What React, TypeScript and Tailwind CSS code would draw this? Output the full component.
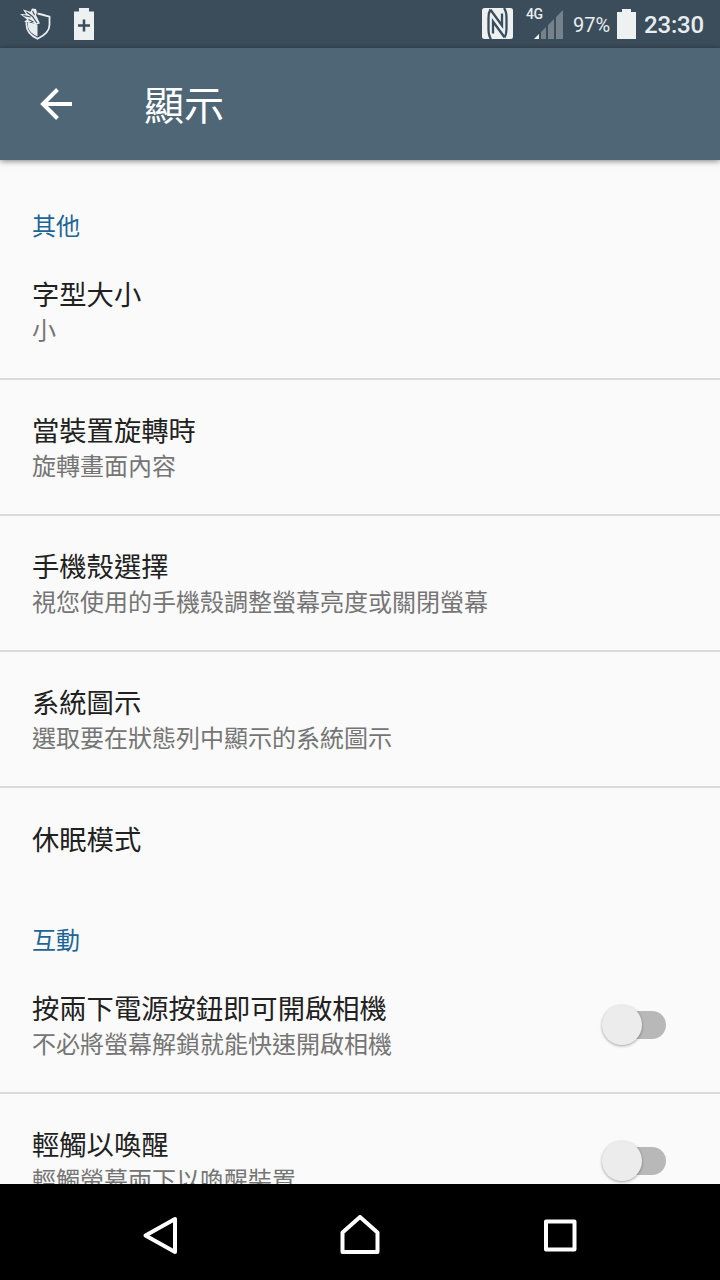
import React from 'react';

function ShieldIcon() {
  return (
    <svg width="32" height="32" viewBox="0 0 32 32" fill="none">
      <path d="M17.500 5.500c4 .7 7 1.700 12 3.200v8c0 6-4.500 10.500-12 14-7-3.200-11-8-11-14v-3" stroke="#e8edf0" strokeWidth="1.800" />
      <path d="M8 14l9.500 2.500v12c-6-2.500-9.500-6.500-9.500-11z" fill="#e8edf0" />
      <path d="M0 6l6 .2L3 1.500l7.500 2.200L12 .5l4 .5 1 3-1 3 4 8.500-4.500 1-4-2.500L4 14l3-2.500z" fill="#e8edf0" />
      <path d="M3.500 7.500l7 1.500M6.500 4l6 4.500 4.500 6.500M8.500 11.500l5 2.500M12.500 3l2 4" stroke="#3b4d5b" strokeWidth="1.100" />
    </svg>
  );
}

function BatteryPlusIcon() {
  return (
    <svg width="20" height="32" viewBox="0 0 20 32">
      <path d="M5 0h10v3.500h5V32H0V3.500h5z" fill="#edf1f2" />
      <path d="M10 11.500v12M4 17.500h12" stroke="#3b4d5b" strokeWidth="2.500" />
    </svg>
  );
}

function NfcIcon() {
  return (
    <svg width="31" height="31" viewBox="0 0 31 31" fill="none">
      <rect width="31" height="31" rx="2.500" fill="#edf1f2" />
      <path d="M8.500 1.500C6.500 4.500 6.500 7 6.500 10v11c0 5 .3 7 2.500 10M22 0c2.300 3 2.500 5 2.500 10v11c0 3 0 5.500-2 8.500" stroke="#3b4d5b" strokeWidth="2.300" />
      <path d="M8.500 1.800L20 17.500V5.500M22.500 29.200L11 13.500v12" stroke="#3b4d5b" strokeWidth="2.300" />
    </svg>
  );
}

function StatusBar() {
  return (
    <header className="flex h-12 shrink-0 items-start bg-[#3b4d5b] font-[Roboto,sans-serif] text-[#e8edf0]">
      <div className="flex pl-5 pt-2"><ShieldIcon /></div>
      <div className="pl-[22px] pt-2"><BatteryPlusIcon /></div>
      <div className="ml-auto flex items-start pr-4">
        <div className="mr-[13px] pt-2"><NfcIcon /></div>
        <div className="relative mr-[10px] h-12 w-[37px]">
          <span className="absolute left-0 top-[7px] text-[14px] font-medium leading-[15px] tracking-[-0.500px]">4G</span>
          <svg className="absolute left-[8px] top-[10px]" width="29" height="29" viewBox="0 0 29 29">
            <path d="M0 29l5-5v5zM7 22l5-5v12H7zM14 15l6-6v20h-6zM22 7l7-7v29h-7z" fill="#75828b" />
            <path d="M0 29l5-5v5z" fill="#edf1f2" />
          </svg>
        </div>
        <span className="w-[44px] whitespace-nowrap pt-[13px] text-[20px] leading-6">97%</span>
        <svg className="mt-[9px]" width="19" height="30" viewBox="0 0 19 30">
          <path d="M5 0h9v3h5v27H0V3h5z" fill="#edf1f2" />
        </svg>
        <span className="ml-2 w-[60px] whitespace-nowrap pt-[11px] text-[24px] font-medium leading-7 tracking-[-0.200px]">23:30</span>
      </div>
    </header>
  );
}

function AppBar() {
  return (
    <div className="z-10 flex h-28 shrink-0 items-center bg-[#4f6676] pl-10 text-white shadow-[0_1px_6px_rgba(0,0,0,0.5)]">
      <svg width="32" height="32" viewBox="0 0 32 32" fill="none" stroke="#fff" strokeWidth="4">
        <path d="M32 16H4M17.500 1.500L3 16l14.500 14.500" />
      </svg>
      <h1 className="ml-[72px] pb-[3px] text-[40px] font-normal leading-[56px]">顯示</h1>
    </div>
  );
}

function SectionTitle({ children }: { children: React.ReactNode }) {
  return <h2 className="flex h-[66px] shrink-0 items-end px-8 pb-[3px] text-[24px] font-normal leading-8 text-[#1d6596]">{children}</h2>;
}

function Toggle() {
  return (
    <div className="mr-[54.500px] flex h-[42px] w-[65px] items-center pl-px">
      <span className="z-10 size-10 shrink-0 rounded-full bg-[#ececec] shadow-[0_1px_3px_rgba(0,0,0,0.35)]" />
      <span className="-ml-5 h-7 w-11 rounded-r-full bg-[#b8b8b8]" />
    </div>
  );
}

type RowProps = { title: string; summary?: string; divider?: boolean; toggle?: boolean };

function Row({ title, summary, divider = true, toggle = false }: RowProps) {
  return (
    <div className={`flex shrink-0 items-center justify-between ${summary ? 'h-[136px]' : 'h-[104px] pb-1'} ${divider ? 'border-b-2 border-[#dadada]' : ''}`}>
      <div className="pl-8">
        <div className="text-[27.300px] leading-[35px] text-[#212121]">{title}</div>
        {summary && <div className="text-[24px] leading-[35px] text-[#757575]">{summary}</div>}
      </div>
      {toggle && <Toggle />}
    </div>
  );
}

function NavBar() {
  return (
    <nav className="flex h-24 shrink-0 items-center justify-around bg-black px-[60px] pt-[6px]">
      <svg width="40" height="40" viewBox="0 0 40 40" fill="none" stroke="#fff" strokeWidth="4" strokeLinejoin="round">
        <path d="M35 4v33L5.500 20.500z" />
      </svg>
      <svg width="40" height="40" viewBox="0 0 40 40" fill="none" stroke="#fff" strokeWidth="4" strokeLinejoin="round">
        <path d="M20 2L37.500 17.500V37h-35V17.500z" />
      </svg>
      <svg width="40" height="40" viewBox="0 0 40 40" fill="none" stroke="#fff" strokeWidth="4" strokeLinejoin="round">
        <path d="M6 6.500h28.500v28H6z" />
      </svg>
    </nav>
  );
}

export default function App() {
  return (
    <div className="flex h-[1280px] w-[720px] flex-col overflow-hidden bg-[#fafafa] font-['Noto_Sans_CJK_TC',sans-serif]">
      <StatusBar />
      <AppBar />
      <main className="flex min-h-0 flex-1 flex-col overflow-hidden pt-[18px]">
        <SectionTitle>其他</SectionTitle>
        <Row title="字型大小" summary="小" />
        <Row title="當裝置旋轉時" summary="旋轉畫面內容" />
        <Row title="手機殼選擇" summary="視您使用的手機殼調整螢幕亮度或關閉螢幕" />
        <Row title="系統圖示" summary="選取要在狀態列中顯示的系統圖示" />
        <Row title="休眠模式" divider={false} />
        <SectionTitle>互動</SectionTitle>
        <Row title="按兩下電源按鈕即可開啟相機" summary="不必將螢幕解鎖就能快速開啟相機" toggle />
        <Row title="輕觸以喚醒" summary="輕觸螢幕兩下以喚醒裝置" toggle />
      </main>
      <NavBar />
    </div>
  );
}
